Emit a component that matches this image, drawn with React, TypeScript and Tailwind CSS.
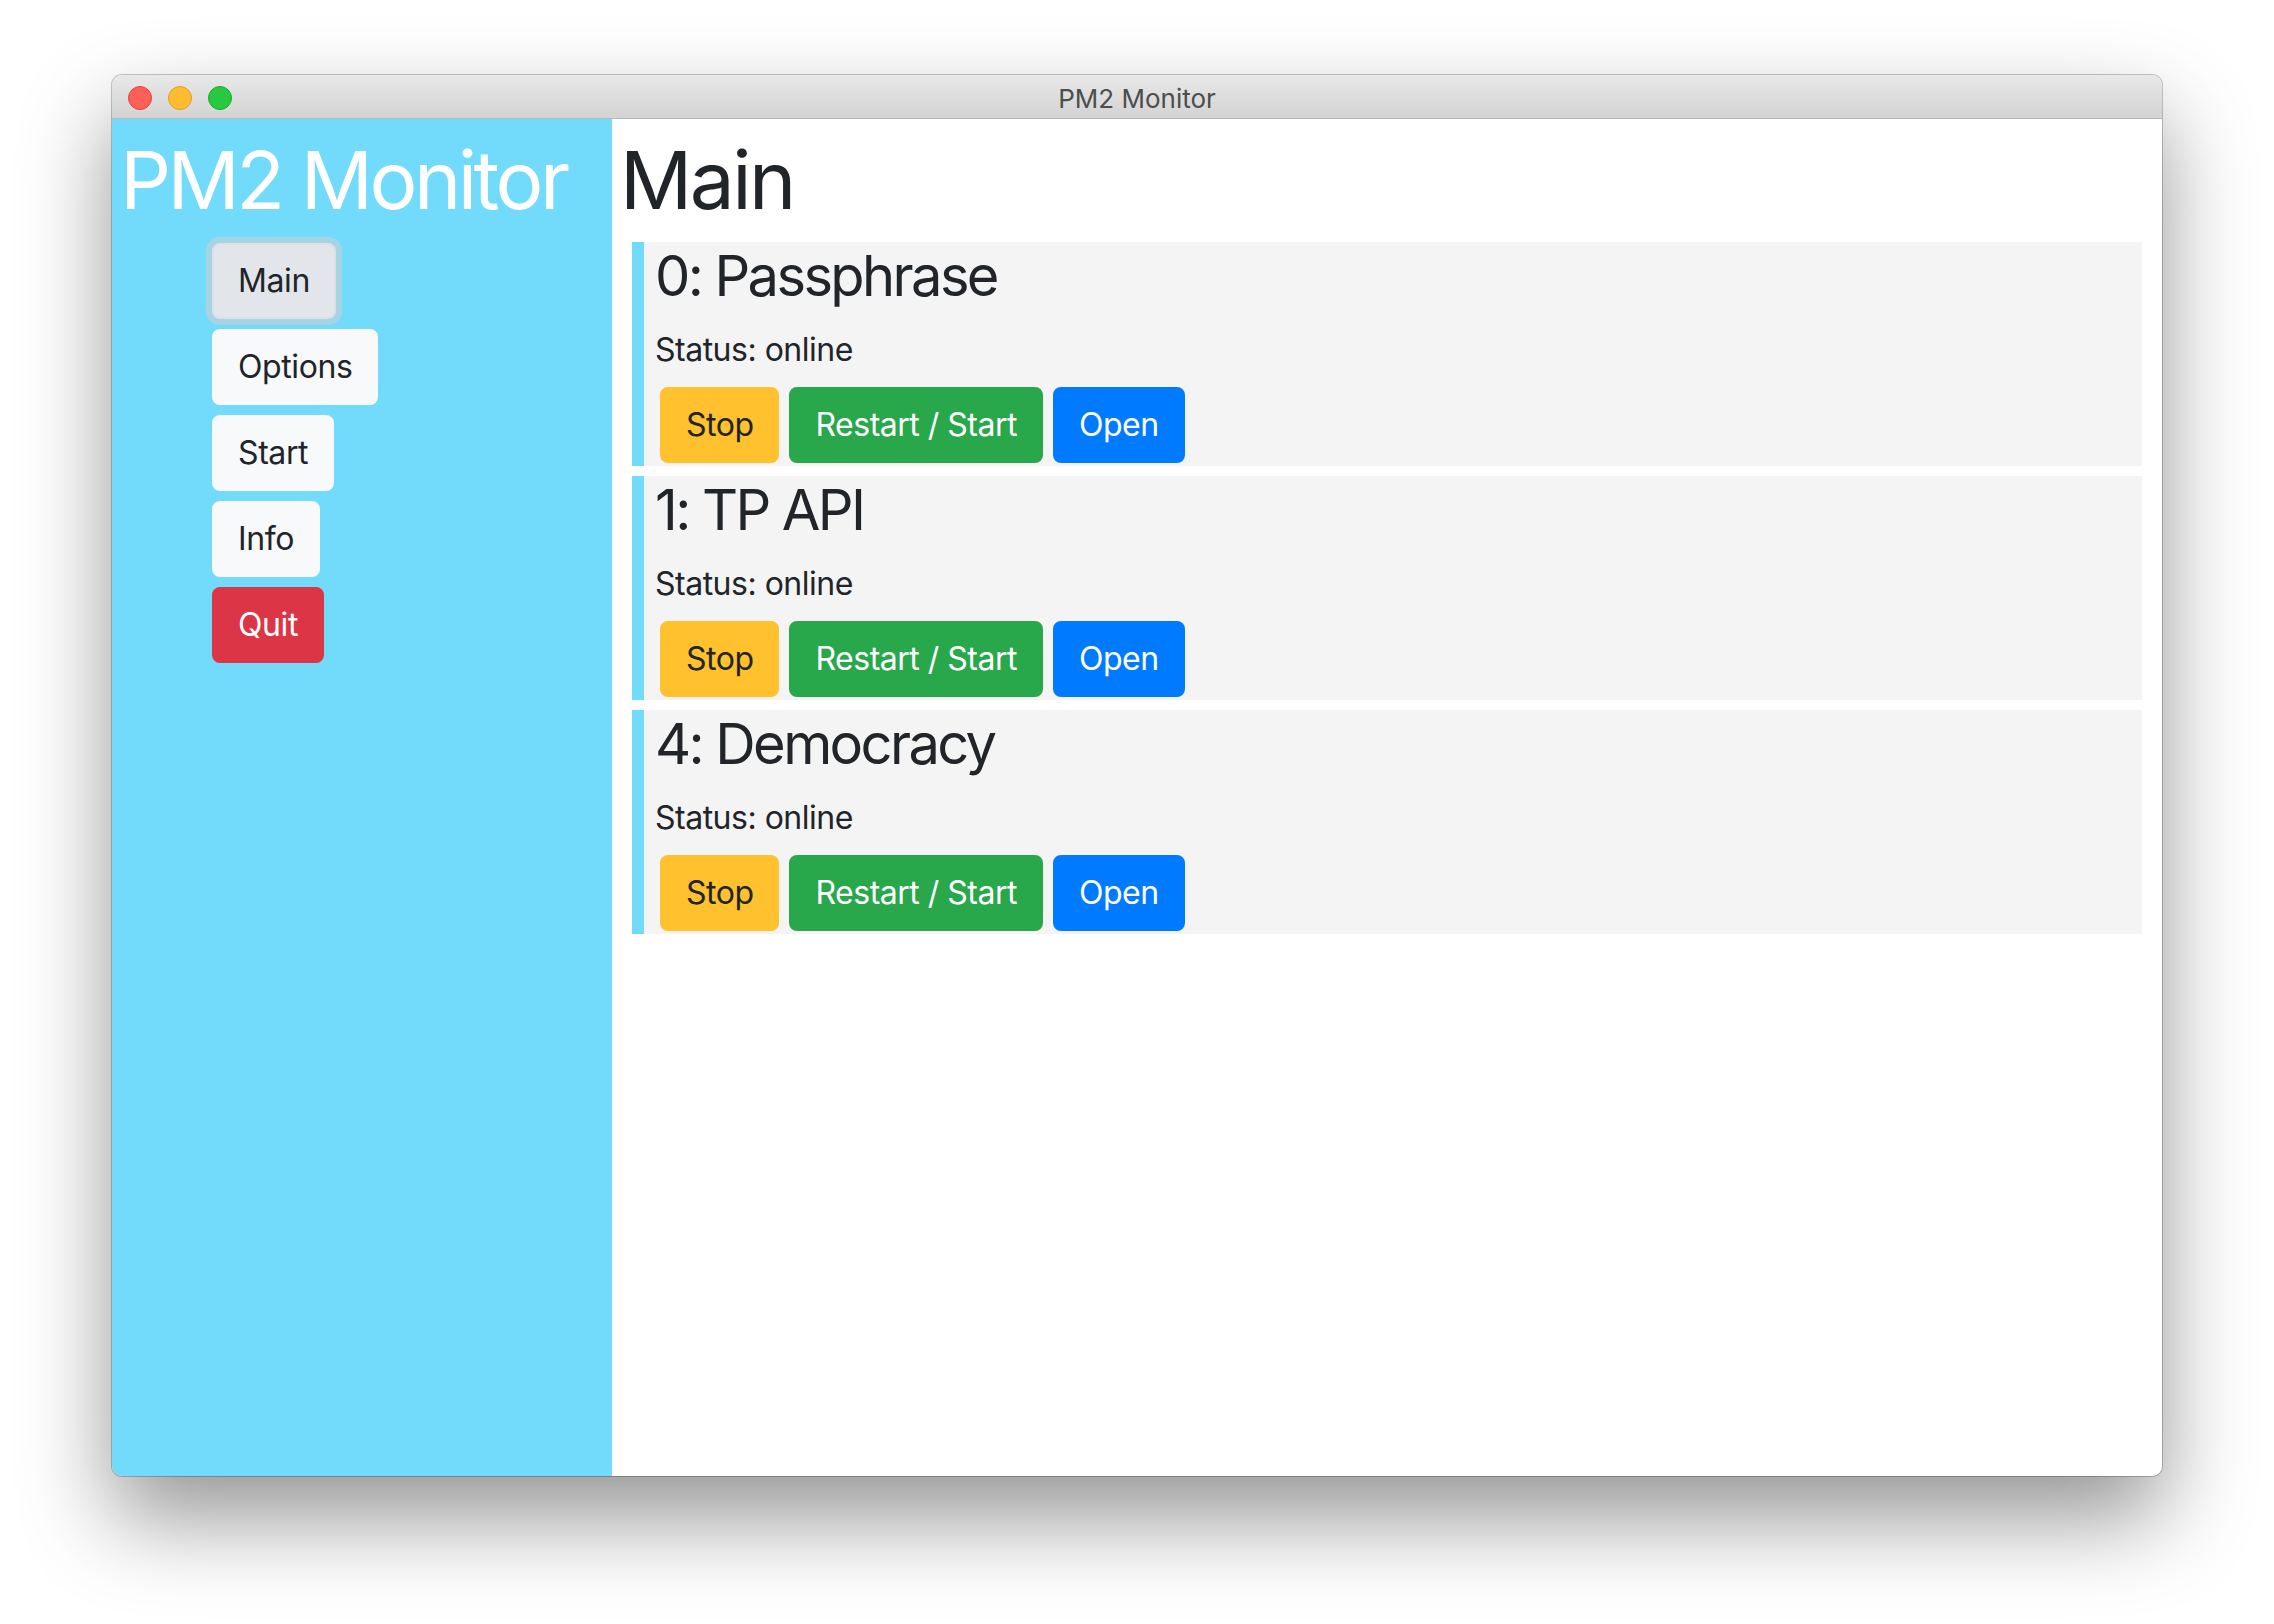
import React from "react";

const procs = [
  { id: 0, name: "Passphrase" },
  { id: 1, name: "TP API" },
  { id: 4, name: "Democracy" },
];

function NavButton({ label, variant }: { label: string; variant: "active" | "light" | "danger" }) {
  const cls =
    variant === "active"
      ? "bg-[#e2e6ea] border-[#dae0e5] text-[#212529] shadow-[0_0_0_6px_rgba(186,210,220,0.75)]"
      : variant === "danger"
      ? "bg-[#dc3545] border-[#dc3545] text-white"
      : "bg-[#f8f9fa] border-[#f8f9fa] text-[#212529]";
  return (
    <button
      className={`h-[76px] px-[24px] rounded-[8px] border-2 text-[32px] leading-[48px] tracking-[-0.4px] ${cls}`}
    >
      {label}
    </button>
  );
}

function ActionButton({ label, cls }: { label: string; cls: string }) {
  return (
    <button
      className={`h-[76px] px-[24px] rounded-[8px] border-2 text-[32px] leading-[48px] tracking-[-0.5px] ${cls}`}
    >
      {label}
    </button>
  );
}

export default function App() {
  return (
    <div
      className="min-h-screen bg-white pl-[112px] pt-[75px]"
      style={{ fontFamily: "Inter, 'Noto Sans', sans-serif" }}
    >
      <div className="w-[2050px] h-[1401px] rounded-[10px] overflow-hidden flex flex-col shadow-[0_0_0_1px_rgba(0,0,0,0.22),0_42px_90px_rgba(0,0,0,0.42)]">
        {/* title bar */}
        <div className="relative h-[44px] shrink-0 flex items-center bg-gradient-to-b from-[#e8e8e8] to-[#d3d3d3] border-b border-[#b8b8b8]">
          <div className="flex items-center gap-[16px] pl-[16px] pt-[2px]">
            <span className="w-[24px] h-[24px] rounded-full bg-[#fe5f57] border border-[#e0443e]" />
            <span className="w-[24px] h-[24px] rounded-full bg-[#febc2e] border border-[#dea123]" />
            <span className="w-[24px] h-[24px] rounded-full bg-[#28c840] border border-[#1aab29]" />
          </div>
          <div className="absolute inset-0 flex items-center justify-center pt-[4px] text-[26px] text-[#4d4d4d] pointer-events-none">
            PM2 Monitor
          </div>
        </div>
        <div className="flex flex-1 min-h-0">
          {/* sidebar */}
          <aside className="w-[500px] shrink-0 bg-[#72dbfb] px-[8px] pt-[13px]">
            <h1 className="text-[80px] leading-[96px] text-white font-normal tracking-[-3.5px] mb-[15px]">
              PM2 Monitor
            </h1>
            <nav className="flex flex-col items-start gap-[10px] pl-[92px]">
              <NavButton label="Main" variant="active" />
              <NavButton label="Options" variant="light" />
              <NavButton label="Start" variant="light" />
              <NavButton label="Info" variant="light" />
              <NavButton label="Quit" variant="danger" />
            </nav>
          </aside>
          {/* main */}
          <main className="flex-1 bg-white px-[8px] pt-[13px]">
            <h1 className="text-[80px] leading-[96px] text-[#212529] font-normal tracking-[-2.5px] mb-[14px]">
              Main
            </h1>
            <div className="flex flex-col gap-[10px] ml-[12px] mr-[12px]">
              {procs.map((p) => (
                <div
                  key={p.id}
                  className="bg-[#f4f4f4] border-l-[12px] border-[#72dbfb] pl-[11px] pt-[1px] pb-[3px]"
                >
                  <h3 className="text-[56px] leading-[67px] text-[#212529] font-normal tracking-[-2.6px] mb-[16px]">
                    {p.id}: {p.name}
                  </h3>
                  <p className="text-[32px] leading-[48px] text-[#212529] tracking-[-0.5px] mb-[13px]">
                    Status: online
                  </p>
                  <div className="flex gap-[10px] pl-[5px]">
                    <ActionButton label="Stop" cls="bg-[#ffc12e] border-[#ffc12e] text-[#212529]" />
                    <ActionButton label="Restart / Start" cls="bg-[#28a74b] border-[#28a74b] text-white" />
                    <ActionButton label="Open" cls="bg-[#007bff] border-[#007bff] text-white" />
                  </div>
                </div>
              ))}
            </div>
          </main>
        </div>
      </div>
    </div>
  );
}
